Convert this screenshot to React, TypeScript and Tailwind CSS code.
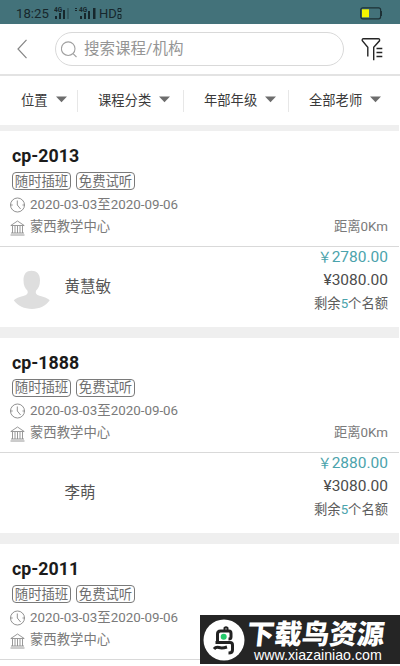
import React from 'react';

type Course = {
  title: string;
  teacher: string;
  price: string;
  avatar?: boolean;
};

const filters = [
  { label: '位置', width: 'w-[78px] pl-[21px]' },
  { label: '课程分类', width: 'w-[106px] pl-5' },
  { label: '年部年级', width: 'w-[105px] pl-5' },
  { label: '全部老师', width: 'w-[111px] pl-5' },
];

const courses: Course[] = [
  { title: 'cp-2013', teacher: '黄慧敏', price: '2780.00', avatar: true },
  { title: 'cp-1888', teacher: '李萌', price: '2880.00' },
  { title: 'cp-2011', teacher: '', price: '' },
];

function StatusBar() {
  return (
    <div className="flex h-6 shrink-0 items-center bg-[#43727a] pl-4 pr-[17px] pt-[3px] text-[#17272c]">
      <span className="w-[34px] text-[13.2px] leading-none">18:25</span>
      <svg className="ml-1 mt-[-1px]" width="17" height="14" viewBox="0 0 17 14" fill="currentColor">
        <text x="0" y="5.5" fontSize="6.5" fontWeight="700">4G</text>
        <path d="M1 10h2v3H1zM5 7h2v6H5zM9 4h2v9H9z" />
        <path d="M13 2h2v11h-2z" opacity=".3" />
      </svg>
      <svg className="mt-[-1px]" width="26" height="14" viewBox="0 0 26 14" fill="currentColor">
        <text x="8" y="5.5" fontSize="6.5" fontWeight="700">4G</text>
        <path d="M4 2h2v1H4zM4 4h2v1H4zM9 10h2v3H9zM13 7h2v6h-2zM17 5h2v8h-2zM22 2h2.5v11H22z" />
      </svg>
      <span className="ml-[2px] text-[13px] leading-none">HD</span>
      <svg width="5" height="13" viewBox="0 0 5 13" fill="none" stroke="currentColor">
        <path d="M1 1.5h3v3H1zM1 7.5h3v4H1z" />
      </svg>
      <svg className="ml-auto mt-[-1px]" width="23" height="13" viewBox="0 0 23 13">
        <rect x=".8" y=".8" width="19.8" height="11" rx="2" fill="none" stroke="#1d3035" strokeWidth="1.2" />
        <path d="M21 4h1v5h-1z" fill="#1d3035" />
        <path d="M2 2.3h7v8H2z" fill="#f5f500" />
      </svg>
    </div>
  );
}

function SearchHeader() {
  return (
    <header className="flex h-[52px] shrink-0 items-center border-b-2 border-[#e3e3e3] pl-[17px]">
      <svg width="11" height="20" viewBox="0 0 11 20" fill="none" stroke="#858585" strokeWidth="1.2">
        <path d="M9.5 .8 1 10l8.5 9.2" />
      </svg>
      <div className="ml-[27px] flex h-[34px] w-[289px] items-center rounded-full border border-[#d9d9d9] pl-[5px]">
        <svg width="17" height="17" viewBox="0 0 17 17" fill="none" stroke="#a0a0a0" strokeWidth="1.1">
          <circle cx="7.2" cy="7.7" r="6.8" />
          <path d="m12.3 12.8 3.2 3.2" />
        </svg>
        <span className="ml-1.5 mt-[2px] text-[15.5px] leading-none text-[#959595]">搜索课程/机构</span>
      </div>
      <svg className="ml-[17px] mt-[-1px]" width="23" height="24" viewBox="0 0 23 24" fill="none" stroke="#252525" strokeWidth="1.4">
        <path d="M6.8 19.5v-9.2L1.3 3.8Q.8 1.7 2.5 1.7h14.8q1.7 0 1.2 2.1l-5.8 6.500v12.900" />
        <path d="M15.5 11.5h5.800M15.5 15.5h5.800M15.5 19.5h5.800" />
      </svg>
    </header>
  );
}

function FilterBar() {
  return (
    <nav className="flex h-[49px] shrink-0 items-center text-[13.3px] text-[#3a3a3a]">
      {filters.map((f, i) => (
        <div
          key={f.label}
          className={`${f.width} flex h-[22px] items-center whitespace-nowrap ${i < 3 ? 'border-r border-[#e7e7e7]' : ''}`}
        >
          <span className="leading-none">{f.label}</span>
          <svg className="ml-2 mt-[-2px] shrink-0" width="11" height="7" viewBox="0 0 11 7">
            <path d="M0 .5h11L5.5 6.2z" fill="#6d6d6d" />
          </svg>
        </div>
      ))}
    </nav>
  );
}

function ClockIcon() {
  return (
    <svg width="16" height="16" viewBox="0 0 16 16" fill="none" stroke="#858585" strokeWidth=".9">
      <circle cx="7.5" cy="8" r="7" />
      <path d="M7.3 3.5V8l3.300 4M.7 8h2M12.5 8h2" />
    </svg>
  );
}

function BuildingIcon() {
  return (
    <svg className="mt-[2px]" width="16" height="16" viewBox="0 0 16 16" fill="none" stroke="#8d8d8d" strokeWidth=".9">
      <path d="M.8 5.5 7.5 1l6.7 4.5zM1 13h13M.5 15h14M2.5 6v7M5 6v7M7.5 6v7M10 6v7M12.5 6v7" />
    </svg>
  );
}

function Avatar() {
  return (
    <svg width="38" height="40" viewBox="0 0 38 40" fill="#dedede">
      <path d="M18.5.8c5 0 8.500 3 8.500 9.500 0 5-1.500 8-4 10.500-.8 2.500.2 4 3.500 5 5 1.300 8.500 2.500 10.200 4.500-4 5.500-10 8.700-17.700 8.700S4.800 35.800.8 30.300c1.700-2 5.200-3.200 10.200-4.500 3.300-1 4.300-2.500 3.500-5-2.500-2.500-4-5.500-4-10.500 0-6.500 3-9.500 8-9.500z" />
    </svg>
  );
}

function CourseCard({ course }: { course: Course }) {
  return (
    <section className="mb-[11px] h-[195.6px] shrink-0 bg-white text-[13.35px] text-[#7a7a7a]">
      <div className="h-[115.5px] border-b-[1.5px] border-[#d9d9d9] pl-[10px] pr-[11px] pt-[15px]">
        <h2 className="pl-[2px] text-[17.8px] font-bold leading-5 text-[#1b1b1b]">{course.title}</h2>
        <div className="mt-[6px] flex gap-[5px] pl-[2px]">
          {['随时插班', '免费试听'].map((tag) => (
            <span
              key={tag}
              className="flex h-[18px] w-[59px] items-center justify-center whitespace-nowrap rounded-[4px] border border-[#7a7a7a] pt-px leading-none text-[#6e6e6e]"
            >
              {tag}
            </span>
          ))}
        </div>
        <div className="mt-[3.500px] flex h-[22px] items-center gap-1">
          <ClockIcon />
          <span className="leading-none">2020-03-03至2020-09-06</span>
        </div>
        <div className="flex h-[22px] items-center gap-1">
          <BuildingIcon />
          <span className="leading-none">蒙西教学中心</span>
          <span className="ml-auto leading-none">距离0Km</span>
        </div>
      </div>
      {course.teacher && (
        <div className="flex h-[79px] items-start pl-[13px] pr-[11px]">
          <div className="mt-[23px] h-10 w-[38px]">{course.avatar && <Avatar />}</div>
          <span className="ml-[13.5px] mt-[32px] text-[15.5px] leading-4 text-[#555]">{course.teacher}</span>
          <div className="ml-auto mt-[-1px] flex flex-col items-end text-[15.5px] leading-[23px] text-[#4c4c4c]">
            <span className="flex text-[#4ba3ac]">
              <span className="text-[14px]">￥</span>
              {course.price}
            </span>
            <span>¥3080.00</span>
            <span className="text-[13.3px] text-[#5c5c5c]">
              剩余<span className="text-[#4ba3ac]">5</span>个名额
            </span>
          </div>
        </div>
      )}
    </section>
  );
}

function Watermark() {
  return (
    <div className="absolute left-[200px] top-[615px] flex h-[49px] w-[200px] bg-[#252525] text-white">
      <svg className="ml-[3px] mt-[4px] shrink-0" width="42" height="42" viewBox="0 0 42 42" fill="none">
        <circle cx="21" cy="21" r="20.5" fill="#fff" />
        <g stroke="#222" strokeWidth="3" strokeLinejoin="round">
          <path d="M21.500 11.500V9q1.500-1.500 3 0v2.500" strokeWidth="2" />
          <path d="M14.500 23.500V15q0-3 3-3h8.500q2 0 2 2.500v3.500q0 2-2.500 2" />
          <path d="M12.500 23.500h14.500q2.500 0 2.500 2.500v5q0 3-4 3" />
          <path d="M11 30q2-2.500 5-1.500t8-.5" />
        </g>
        <circle cx="20.7" cy="17.7" r="3" fill="#24cb6b" />
      </svg>
      <div className="flex flex-col pt-[7px]">
        <span className="ml-[2px] -skew-x-6 whitespace-nowrap text-[27.5px] font-black leading-[25px]">下载鸟资源</span>
        <span className="ml-[9px] whitespace-nowrap font-['Liberation_Sans'] text-[14.2px] leading-4">www.xiazainiao.com</span>
      </div>
    </div>
  );
}

export default function App() {
  return (
    <div className="relative flex h-[666px] w-[400px] flex-col overflow-hidden bg-white font-[Roboto,'Noto_Sans_CJK_SC',sans-serif]">
      <StatusBar />
      <SearchHeader />
      <FilterBar />
      <main className="mr-px flex min-h-0 flex-1 flex-col overflow-hidden bg-[#efefef] pt-[6px]">
        {courses.map((course) => (
          <CourseCard key={course.title} course={course} />
        ))}
      </main>
      <Watermark />
    </div>
  );
}
